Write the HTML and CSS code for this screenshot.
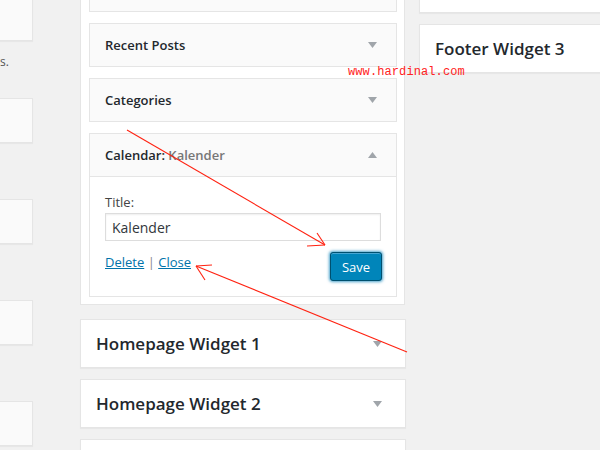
FILE: index.html
```html
<!DOCTYPE html>
<html lang="en">
<head>
<meta charset="utf-8">
<title>Widgets</title>
<link rel="stylesheet" href="styles.css">
</head>
<body>
<div class="page">
  <div class="col-left">
    <div class="card first"></div>
    <div class="note">s.</div>
    <div class="card"></div>
    <div class="card"></div>
    <div class="card"></div>
    <div class="card"></div>
  </div>

  <div class="col-mid">
    <div class="sidebar">
      <div class="widget stub"><div class="widget-top"></div></div>
      <div class="widget">
        <div class="widget-top"><span class="wt">Recent Posts</span><svg class="tri" width="9" height="6" viewBox="0 0 9 6"><polygon points="0,0 9,0 4.5,6" /></svg></div>
      </div>
      <div class="widget">
        <div class="widget-top"><span class="wt">Categories</span><svg class="tri" width="9" height="6" viewBox="0 0 9 6"><polygon points="0,0 9,0 4.5,6" /></svg></div>
      </div>
      <div class="widget open">
        <div class="widget-top"><span class="wt">Calendar:<span class="in-title"> Kalender</span></span><svg class="tri" width="9" height="6" viewBox="0 0 9 6"><polygon points="0,6 9,6 4.5,0" /></svg></div>
        <div class="widget-inside">
          <label class="lbl" for="t">Title:</label>
          <input id="t" class="field" type="text" value="Kalender">
          <div class="actions">
            <div class="links"><a href="#">Delete</a> <span class="sep">|</span> <a href="#">Close</a></div>
            <button class="save" type="button">Save</button>
          </div>
        </div>
      </div>
    </div>
    <div class="area"><h3>Homepage Widget 1</h3><svg class="tri" width="9" height="6" viewBox="0 0 9 6"><polygon points="0,0 9,0 4.5,6" /></svg></div>
    <div class="area"><h3>Homepage Widget 2</h3><svg class="tri" width="9" height="6" viewBox="0 0 9 6"><polygon points="0,0 9,0 4.5,6" /></svg></div>
    <div class="area"></div>
  </div>

  <div class="col-right">
    <div class="area rstub"></div>
    <div class="area"><h3>Footer Widget 3</h3></div>
  </div>
</div>

<div class="watermark">www.hardinal.com</div>

<svg class="overlay" width="600" height="450" viewBox="0 0 600 450">
  <g stroke="#f21" stroke-width="1.1" fill="none">
    <line x1="127" y1="130" x2="325" y2="245"/>
    <line x1="325" y1="245" x2="317" y2="233"/>
    <line x1="325" y1="245" x2="307" y2="246"/>
    <line x1="196" y1="266" x2="407" y2="352"/>
    <line x1="196" y1="266" x2="212" y2="265"/>
    <line x1="196" y1="266" x2="205" y2="280"/>
  </g>
</svg>
</body>
</html>
```

FILE: styles.css
```css
html, body {
  margin: 0;
  padding: 0;
}
body {
  width: 600px;
  height: 450px;
  overflow: hidden;
  background: #f1f1f1;
  font-family: "Open Sans", "Liberation Sans", sans-serif;
  color: #23282d;
  position: relative;
}
.page {
  display: flex;
  align-items: flex-start;
  height: 450px;
  overflow: hidden;
}

/* left column */
.col-left {
  width: 33px;
  display: flex;
  flex-direction: column;
}
.card {
  height: 43px;
  background: #fafafa;
  border: 1px solid #e5e5e5;
  border-left: none;
  box-shadow: 0 1px 1px rgba(0,0,0,.04);
  margin-bottom: 56px;
}
.card.first {
  margin-top: -4px;
  margin-bottom: 0;
}
.note {
  height: 57px;
  box-sizing: border-box;
  padding-top: 13px;
  font-size: 12px;
  line-height: 16px;
  color: #555;
  margin-left: 0;
}

/* middle column */
.col-mid {
  width: 325px;
  margin-left: 47px;
  display: flex;
  flex-direction: column;
}
.sidebar {
  background: #fff;
  border: 1px solid #e5e5e5;
  border-top: none;
  padding: 0 7px 7px 8px;
  margin-bottom: 14px;
}
.widget {
  border: 1px solid #e5e5e5;
  background: #fafafa;
  margin-bottom: 11px;
}
.widget.stub {
  margin-top: -32px;
  margin-bottom: 11px;
}
.widget.open {
  margin-bottom: 0;
}
.widget-top {
  height: 42px;
  display: flex;
  align-items: center;
  justify-content: space-between;
  padding: 0 19px 0 15px;
}
.wt {
  font-size: 13px;
  font-weight: 600;
  color: #23282d;
}
.in-title {
  color: #777;
}
.tri {
  fill: #a0a5aa;
  display: block;
}
.widget.open .widget-top {
  height: 42px;
  border-bottom: 1px solid #e5e5e5;
}
.widget-inside {
  background: #fff;
  padding: 16px 15px 15px 15px;
  display: flex;
  flex-direction: column;
}
.lbl {
  font-size: 13px;
  line-height: 18px;
  color: #444;
  margin-bottom: 2px;
}
.field {
  height: 28px;
  box-sizing: border-box;
  border: 1px solid #ddd;
  box-shadow: inset 0 1px 2px rgba(0,0,0,.07);
  padding: 0 6px;
  font-family: "Open Sans", "Liberation Sans", sans-serif;
  font-size: 14px;
  color: #32373c;
  margin: 0;
  outline: none;
}
.actions {
  margin-top: 11px;
  display: flex;
  justify-content: space-between;
  align-items: flex-start;
}
.links {
  font-size: 13px;
  line-height: 20px;
  color: #666;
}
.links a {
  color: #0073aa;
  text-decoration: underline;
}
.sep {
  color: #888;
}
.save {
  height: 29px;
  width: 52px;
  padding: 0;
  margin-right: -1px;
  background: #0085ba;
  border: 1px solid #00506f;
  border-radius: 3px;
  color: #fff;
  font-family: "Open Sans", "Liberation Sans", sans-serif;
  font-size: 13px;
  box-shadow: 0 0 3px 1px rgba(30,140,190,.8), inset 0 1px 0 #46a6d3;
}

.area {
  height: 47px;
  background: #fff;
  border: 1px solid #e5e5e5;
  box-shadow: 0 1px 1px rgba(0,0,0,.04);
  margin-bottom: 11px;
  display: flex;
  align-items: center;
  justify-content: space-between;
  padding: 0 23px 0 15px;
  flex-shrink: 0;
}
.col-mid .area {
  width: 286px;
}
.area h3 {
  margin: 0;
  font-size: 17px;
  font-weight: 600;
  color: #23282d;
}

/* right column */
.col-right {
  margin-left: 14px;
  flex: 1;
  display: flex;
  flex-direction: column;
}
.col-right .area {
  border-right: none;
}
.area.rstub {
  margin-top: -36px;
}

.watermark {
  position: absolute;
  left: 348px;
  top: 65px;
  font-family: "Liberation Mono", "DejaVu Sans Mono", monospace;
  font-size: 12px;
  line-height: 14px;
  color: #f22;
  letter-spacing: 0.1px;
}
.overlay {
  position: absolute;
  left: 0;
  top: 0;
  pointer-events: none;
}
```
